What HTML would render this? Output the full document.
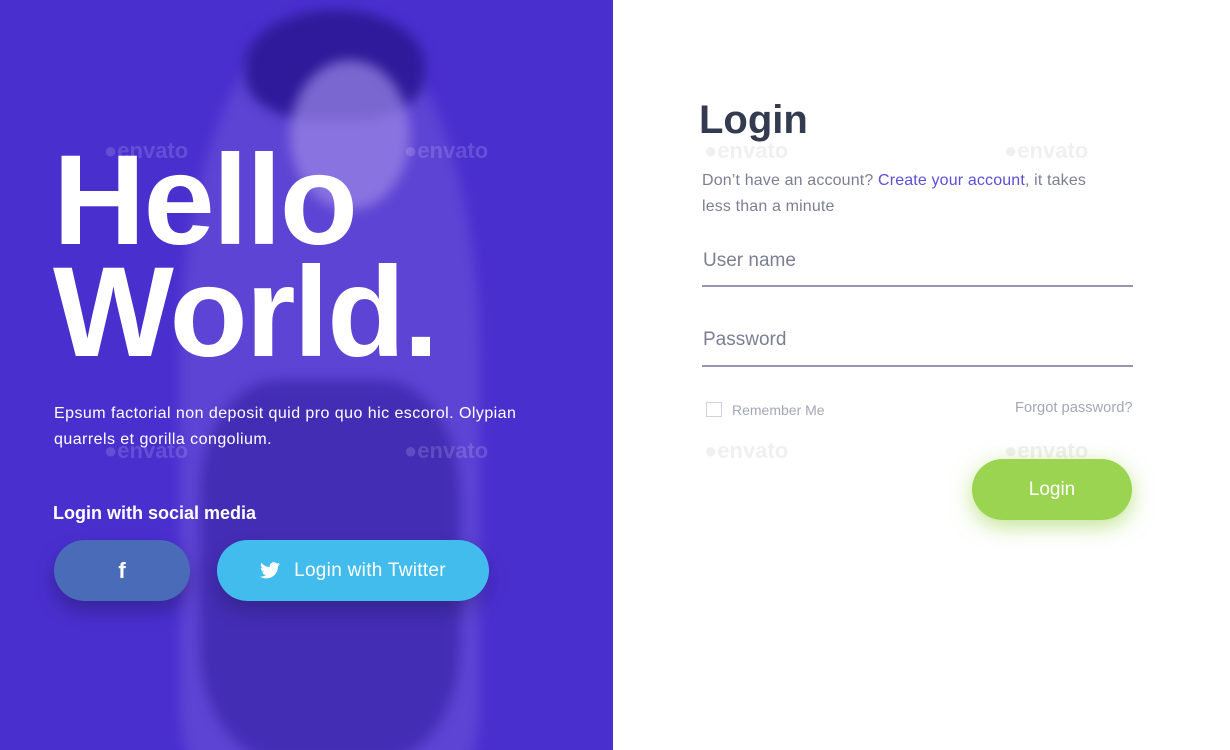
<!DOCTYPE html>
<html><head><meta charset="utf-8"><style>
*{margin:0;padding:0;box-sizing:border-box}
body{width:1230px;height:750px;overflow:hidden;font-family:"Liberation Sans",sans-serif;background:#fff;position:relative}
.left{position:absolute;left:0;top:0;width:613px;height:750px;background:#4a2fcf;overflow:hidden}
.fig{position:absolute;border-radius:50%;filter:blur(6px)}
.wm{position:absolute;color:rgba(200,200,200,.28);font-size:22px;font-weight:bold}
.l .wm{color:rgba(255,255,255,.15)}
h1.hw{position:absolute;left:53px;top:145px;color:#fff;font-size:128px;line-height:112px;font-weight:bold;letter-spacing:-2px}
.p{position:absolute;left:54px;top:401px;color:#fff;font-size:16px;line-height:26px;width:480px;letter-spacing:.45px}
.sm{position:absolute;left:53px;top:503px;color:#fff;font-size:18px;font-weight:bold}
.btn{position:absolute;border-radius:31px;color:#fff;display:flex;align-items:center;justify-content:center;font-size:19px}
.r h2{position:absolute;left:699px;top:98px;font-size:40px;color:#343a4f;font-weight:bold}
.t{position:absolute;left:702px;top:168px;font-size:16px;line-height:26px;color:#7b7f93;width:410px;letter-spacing:.15px}
.t a{color:#5b4fd6;text-decoration:none}
.in{position:absolute;left:702px;width:431px;border-bottom:2px solid #9498b0;font-size:19px;color:#7b7f93;padding-left:1px}
</style></head><body>
<div class="left l">
<div class="fig" style="left:180px;top:20px;width:300px;height:760px;background:#6a52d8;border-radius:45% 45% 10% 10%;opacity:.6"></div>
<div class="fig" style="left:245px;top:10px;width:180px;height:110px;background:#2e1a9a;border-radius:50% 50% 40% 40%"></div>
<div class="fig" style="left:290px;top:60px;width:120px;height:150px;background:#9b88e6;opacity:.7"></div>
<div class="fig" style="left:200px;top:380px;width:260px;height:380px;background:#3a24a8;border-radius:30%;opacity:.7"></div>
<div class="wm" style="left:104px;top:138px">●envato</div><div class="wm" style="left:404px;top:138px">●envato</div>
<div class="wm" style="left:104px;top:438px">●envato</div><div class="wm" style="left:404px;top:438px">●envato</div>
<h1 class="hw">Hello<br>World.</h1>
<div class="p">Epsum factorial non deposit quid pro quo hic escorol. Olypian quarrels et gorilla congolium.</div>
<div class="sm">Login with social media</div>
<div class="btn" style="left:54px;top:540px;width:136px;height:61px;background:#4a6cb8;box-shadow:0 10px 20px rgba(0,0,0,.25);font-weight:bold;font-size:22px">f</div>
<div class="btn" style="left:217px;top:540px;width:272px;height:61px;background:#42bcec;box-shadow:0 10px 20px rgba(0,0,0,.2);letter-spacing:.3px"><svg width="20" height="17" viewBox="0 0 24 20" style="margin-right:14px"><path fill="#fff" d="M24 2.4a10 10 0 0 1-2.8.8A5 5 0 0 0 23.3.5a10 10 0 0 1-3.1 1.2A4.9 4.9 0 0 0 11.8 6 14 14 0 0 1 1.7.9a4.9 4.9 0 0 0 1.5 6.6A5 5 0 0 1 1 6.9a4.9 4.9 0 0 0 3.9 4.9 5 5 0 0 1-2.2.1 4.9 4.9 0 0 0 4.6 3.4A9.9 9.9 0 0 1 0 17.3 14 14 0 0 0 7.5 19.5c9 0 14-7.5 14-14v-.6A10 10 0 0 0 24 2.4z"/></svg>Login with Twitter</div>
</div>
<div class="r">
<div class="wm" style="left:704px;top:138px">●envato</div><div class="wm" style="left:1004px;top:138px">●envato</div>
<div class="wm" style="left:704px;top:438px">●envato</div><div class="wm" style="left:1004px;top:438px">●envato</div>
<h2>Login</h2>
<div class="t">Don’t have an account? <a>Create your account</a>, it takes less than a minute</div>
<div class="in" style="top:250px;height:37px">User name</div>
<div class="in" style="top:329px;height:38px">Password</div>
<div style="position:absolute;left:706px;top:402px;width:16px;height:15px;border:1px solid #d0d3de"></div>
<div style="position:absolute;left:732px;top:402px;font-size:14px;color:#a3a7b8">Remember Me</div>
<div style="position:absolute;left:1015px;top:400px;font-size:14.7px;color:#a3a7b8">Forgot password?</div>
<div class="btn" style="left:972px;top:459px;width:160px;height:61px;background:#9bd451;box-shadow:0 6px 22px rgba(150,210,70,.6)">Login</div>
</div>
</body></html>
